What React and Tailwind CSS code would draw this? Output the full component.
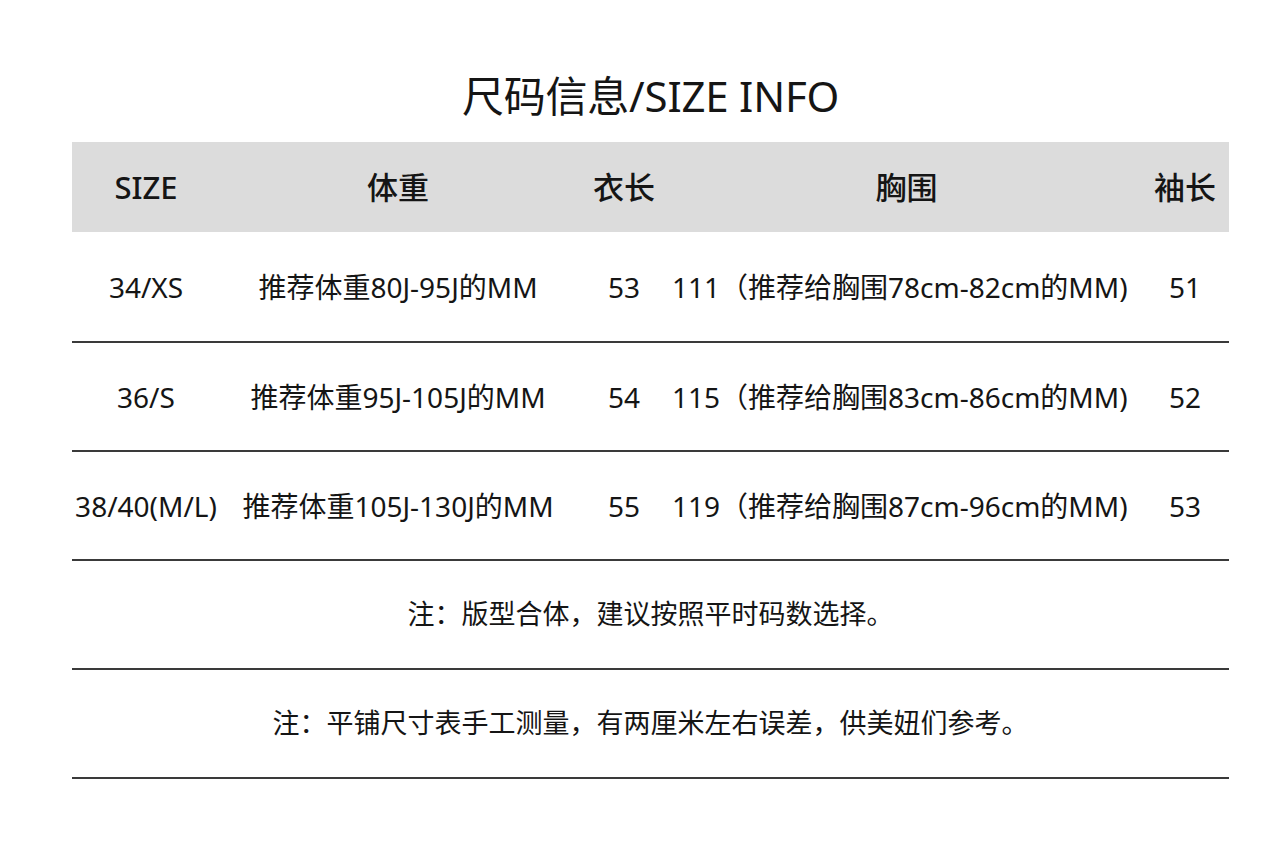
import React from 'react';

const rows = [
    { size: '34/XS', weight: '推荐体重80J-95J的MM', length: '53', chest: '111（推荐给胸围78cm-82cm的MM)', sleeve: '51' },
    { size: '36/S', weight: '推荐体重95J-105J的MM', length: '54', chest: '115（推荐给胸围83cm-86cm的MM)', sleeve: '52' },
    { size: '38/40(M/L)', weight: '推荐体重105J-130J的MM', length: '55', chest: '119（推荐给胸围87cm-96cm的MM)', sleeve: '53' },
];

const notes = [
    '注：版型合体，建议按照平时码数选择。',
    '注：平铺尺寸表手工测量，有两厘米左右误差，供美妞们参考。',
];

const cols = 'grid grid-cols-[148px_356px_96px_469px_88px]';

const App = () => {
    return (
        <div
            className="bg-white min-h-screen text-[#151515] pt-[68px]"
            style={{ fontFamily: '"Noto Sans", "Noto Sans CJK SC", sans-serif' }}
        >
            <div className="mx-[72px] w-[1157px]">
                <h1 className="text-center text-[42px] leading-[56px] tracking-[-0.2px]">尺码信息/SIZE INFO</h1>

                {/* Header */}
                <div className={`${cols} mt-[18px] h-[90px] items-center bg-[#dcdcdc] text-[31px] font-medium`}>
                    <div className="text-center">SIZE</div>
                    <div className="text-center">体重</div>
                    <div className="text-center">衣长</div>
                    <div className="text-center">胸围</div>
                    <div className="text-center">袖长</div>
                </div>

                {/* Size rows */}
                {rows.map((r, i) => (
                    <div
                        key={r.size}
                        className={`${cols} ${i === 0 ? 'h-[111px]' : 'h-[109px]'} items-center border-b-2 border-[#3a3a3a] text-[28px] whitespace-nowrap`}
                    >
                        <div className="text-center">{r.size}</div>
                        <div className="text-center">{r.weight}</div>
                        <div className="text-center">{r.length}</div>
                        <div className="text-center pr-[14px]">{r.chest}</div>
                        <div className="text-center">{r.sleeve}</div>
                    </div>
                ))}

                {/* Notes */}
                {notes.map((n) => (
                    <div key={n} className="h-[109px] flex items-center justify-center border-b-2 border-[#3a3a3a] text-[27px]">
                        {n}
                    </div>
                ))}
            </div>
        </div>
    );
};

export default App;
